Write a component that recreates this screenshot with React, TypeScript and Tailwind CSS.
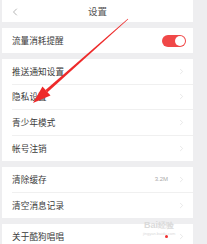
import { ChevronLeft, ChevronRight } from 'lucide-react';

const font = { fontFamily: '"Noto Sans CJK SC", "Noto Sans", sans-serif' };

function Row({ label, last, right }: { label: string; last?: boolean; right?: React.ReactNode }) {
  return (
    <div className="h-[25.5px] pl-[10px] flex">
      <div className={`flex-1 flex items-center pr-[7px] ${last ? '' : 'border-b border-[#f0f0f0]'}`}>
        <span className="flex-1 text-[8.6px] text-[#3a3a3a] leading-none tracking-[0.1px]">{label}</span>
        {right}
        <ChevronRight size={9} strokeWidth={1.1} className="text-[#c8c8c8]" />
      </div>
    </div>
  );
}

export default function App() {
  return (
    <div className="w-[207px] h-[244px] bg-[#eeeef0] overflow-hidden relative" style={font}>
      <div className="w-[191px] ml-[2px]">
        {/* header */}
        <div className="h-[22px] bg-white relative flex items-center justify-center">
          <ChevronLeft size={12} strokeWidth={1.1} className="absolute left-[7px] top-[6px] text-[#777]" />
          <span className="text-[9.5px] text-[#555]">设置</span>
        </div>

        <div className="mt-[6px] h-[25px] bg-white flex items-center pl-[10px] pr-[7px]">
          <span className="flex-1 text-[8.6px] text-[#3a3a3a] leading-none">流量消耗提醒</span>
          <div className="w-[24px] h-[12px] rounded-full bg-[#f04848] flex items-center justify-end pr-[1px]">
            <div className="w-[10px] h-[10px] rounded-full bg-white" />
          </div>
        </div>

        <div className="mt-[6px] bg-white">
          <Row label="推送通知设置" />
          <Row label="隐私设置" />
          <Row label="青少年模式" />
          <Row label="帐号注销" last />
        </div>

        <div className="mt-[6px] bg-white">
          <Row
            label="清除缓存"
            right={<span className="text-[6px] text-[#aaa] mr-[9px]" style={{ fontFamily: '"Liberation Sans", sans-serif' }}>3.2M</span>}
          />
          <Row label="清空消息记录" last />
        </div>

        <div className="mt-[6px] bg-white">
          <Row
            label="关于酷狗唱唱"
            last
            right={<span className="w-[3px] h-[3px] rounded-full bg-[#f03030] mr-[9px]" />}
          />
        </div>
      </div>

      {/* watermark */}
      <div className="absolute left-[143px] top-[221px] flex flex-col items-center text-[#dadada] leading-none pointer-events-none">
        <span className="text-[9px] font-bold" style={{ fontFamily: '"Liberation Sans", sans-serif' }}>Bai<span className="text-[8px]">经验</span></span>
        <span className="text-[4px] mt-[2px]" style={{ fontFamily: '"Liberation Sans", sans-serif' }}>jingyan.baidu.com</span>
      </div>

      {/* red arrow */}
      <svg className="absolute left-0 top-0" width="207" height="244" viewBox="0 0 207 244">
        <polygon points="128.2,19.2 127.8,18.8 45.5,90 47.5,92.2" fill="#ee2a2a" />
        <polygon points="33,103 42.5,86.6 46.5,91.1 50.5,95.6" fill="#ee2a2a" />
      </svg>
    </div>
  );
}
